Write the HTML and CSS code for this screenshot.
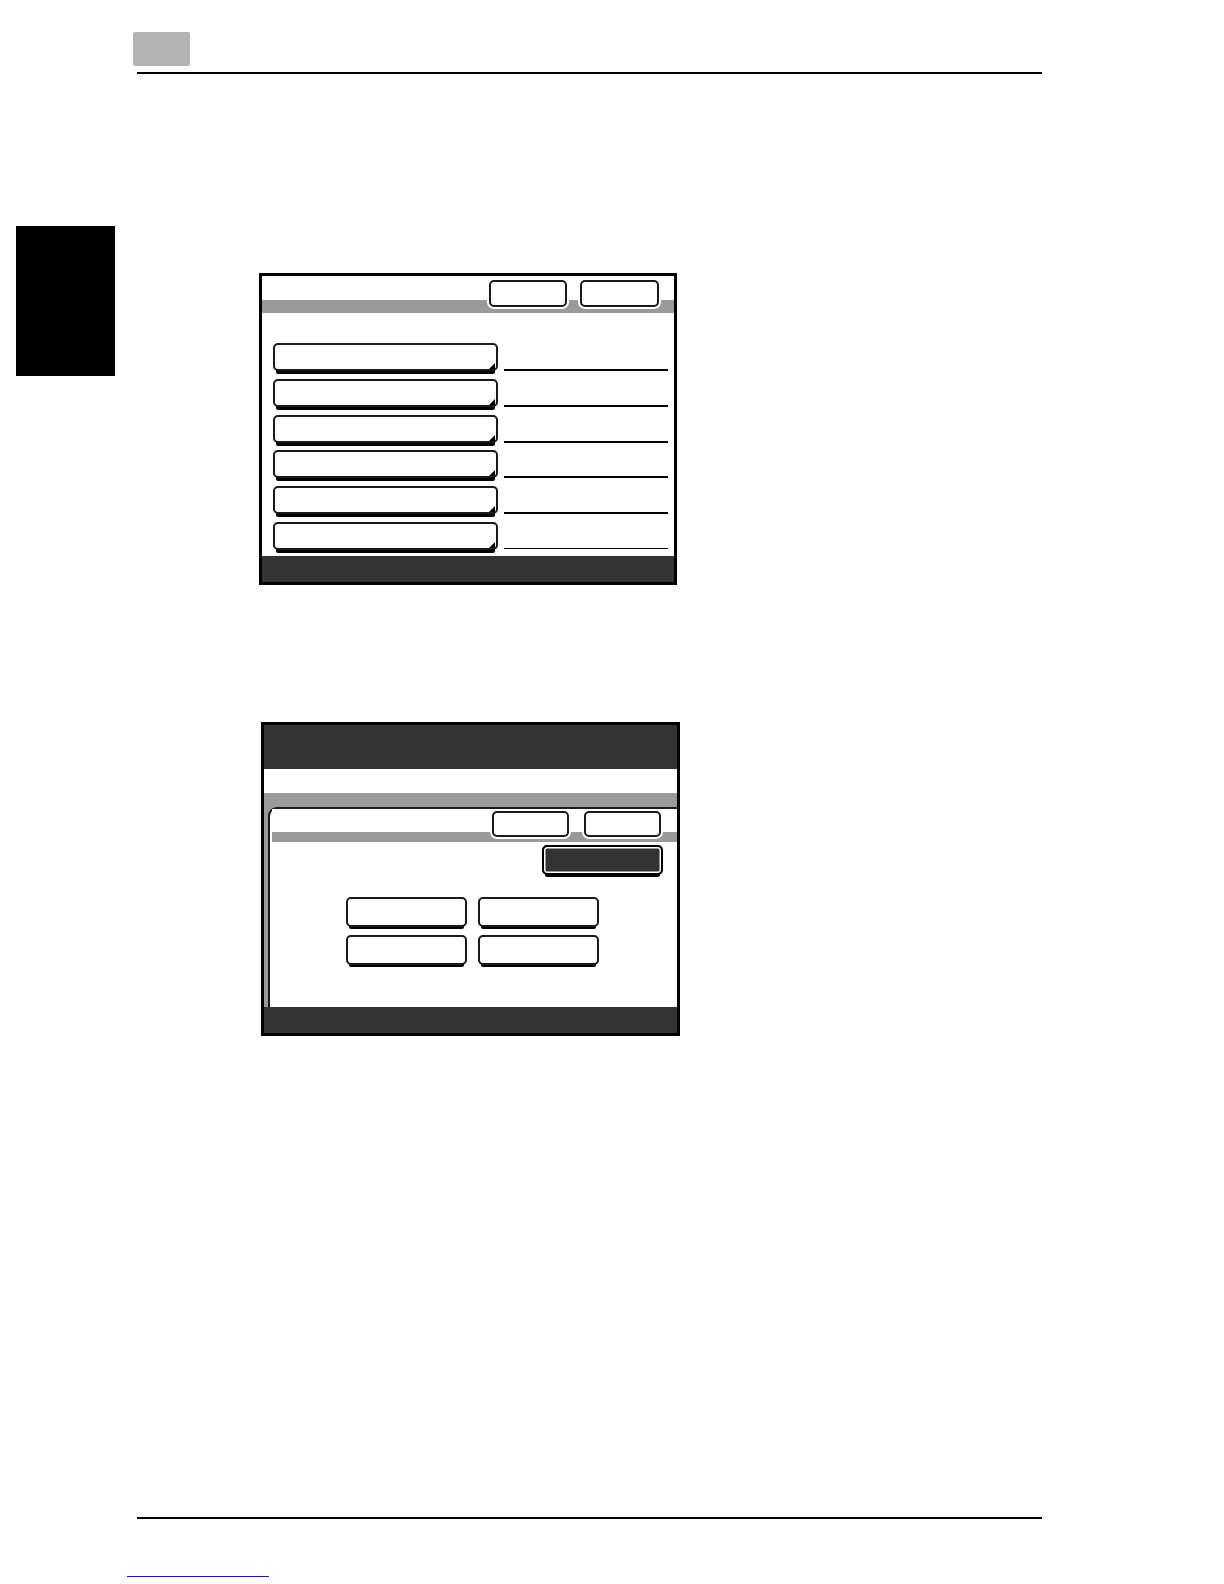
FILE: index.html
```html
<!DOCTYPE html>
<html lang="en">
<head>
<meta charset="utf-8">
<title>Screen</title>
<link rel="stylesheet" href="styles.css">
</head>
<body>
<div class="page">
  <header class="head">
    <div class="chapter"></div>
    <div class="rule"></div>
  </header>

  <div class="content">
    <div class="tab"></div>
    <div class="screens">
      <div class="screen s1">
        <div class="s1-body">
          <div class="titlebar t1">
            <div class="tbtn w78"></div>
            <div class="tbtn w79"></div>
          </div>
          <div class="rows">
            <div class="row"><div class="rowbtn"><span class="tri"></span></div><div class="rline"></div></div>
            <div class="row"><div class="rowbtn"><span class="tri"></span></div><div class="rline"></div></div>
            <div class="row"><div class="rowbtn"><span class="tri"></span></div><div class="rline"></div></div>
            <div class="row"><div class="rowbtn"><span class="tri"></span></div><div class="rline"></div></div>
            <div class="row"><div class="rowbtn"><span class="tri"></span></div><div class="rline thin"></div></div>
            <div class="row"><div class="rowbtn"><span class="tri"></span></div><div class="rline thin"></div></div>
          </div>
        </div>
        <div class="sfoot"></div>
      </div>

      <div class="screen s2">
        <div class="s2-head"></div>
        <div class="s2-white"></div>
        <div class="s2-gray">
          <div class="panel">
            <div class="titlebar t2">
              <div class="tbtn w77"></div>
              <div class="tbtn w77"></div>
            </div>
            <div class="darkrow"><div class="darkbtn"></div></div>
            <div class="grid4">
              <div class="gbtn"></div>
              <div class="gbtn"></div>
              <div class="gbtn"></div>
              <div class="gbtn"></div>
            </div>
          </div>
        </div>
        <div class="sfoot"></div>
      </div>
    </div>
  </div>

  <footer class="foot">
    <div class="rule"></div>
    <div class="link"></div>
  </footer>
</div>
</body>
</html>
```

FILE: styles.css
```css
* { box-sizing: border-box; }

html, body {
  margin: 0;
  padding: 0;
  background: #fff;
  font-family: "Liberation Sans", Arial, sans-serif;
}

.page {
  width: 1224px;
  height: 1584px;
  display: flex;
  flex-direction: column;
}

/* header */
.head {
  padding-top: 32px;
}
.chapter {
  margin-left: 133px;
  width: 57px;
  height: 34px;
  background: #b3b3b3;
  border-radius: 2px;
}
.rule {
  margin-left: 137px;
  width: 905px;
  height: 2px;
  background: #000;
}
.head .rule {
  margin-top: 6px;
}

/* content */
.content {
  display: flex;
  align-items: flex-start;
}
.tab {
  flex: none;
  margin-top: 152px;
  margin-left: 16px;
  width: 99px;
  height: 150px;
  background: #000;
}
.screens {
  margin-left: 144px;
  margin-top: 199px;
  display: flex;
  flex-direction: column;
}

.screen {
  border: 3px solid #000;
  display: flex;
  flex-direction: column;
  overflow: hidden;
  background: #fff;
}
.sfoot {
  flex: none;
  height: 26px;
  background: #333;
}

/* shared buttons */
.tbtn {
  flex: none;
  height: 27px;
  border: 2px solid #1a1a1a;
  border-radius: 5px;
  background: #fff;
  box-shadow: 0 0 0 2px #fff;
}
.w78 { width: 78px; }
.w79 { width: 79px; }
.w77 { width: 77px; height: 26px; }

.titlebar {
  display: flex;
  justify-content: flex-end;
}

/* screen 1 */
.s1 {
  width: 418px;
  height: 312px;
}
.s1-body {
  flex: 1;
}
.t1 {
  height: 37px;
  padding-top: 4px;
  padding-right: 15px;
  gap: 13px;
  background: linear-gradient(to bottom, #fff 0, #fff 24px, #9a9a9a 24px, #9a9a9a 37px);
}
.rows {
  padding-top: 30px;
  padding-left: 11px;
  display: flex;
  flex-direction: column;
  gap: 4.75px;
}
.row {
  display: flex;
  height: 31px;
}
.rowbtn {
  flex: none;
  width: 225px;
  height: 28px;
  border: 2px solid #1a1a1a;
  border-radius: 5px;
  background: #fff;
  box-shadow: 0 6px 0 -3px #000;
  display: flex;
  justify-content: flex-end;
  align-items: flex-end;
  padding-right: 1px;
}
.tri {
  width: 0;
  height: 0;
  border-left: 6px solid transparent;
  border-bottom: 6px solid #000;
}
.rline {
  align-self: flex-end;
  margin-left: 6px;
  margin-bottom: 3px;
  width: 164px;
  height: 2px;
  background: #000;
}
.rline.thin {
  height: 1.5px;
  margin-bottom: 3.5px;
}

/* screen 2 */
.s2 {
  margin-top: 137px;
  margin-left: 2px;
  width: 419px;
  height: 314px;
}
.s2-head {
  flex: none;
  height: 44px;
  background: #333;
}
.s2-white {
  flex: none;
  height: 24px;
  background: #fff;
}
.s2-gray {
  flex: none;
  height: 214px;
  background: #9a9a9a;
  padding-top: 14px;
  padding-left: 3.5px;
}
.panel {
  height: 200px;
  background: #fff;
  border-top: 2px solid #1a1a1a;
  border-left: 2px solid #1a1a1a;
  border-top-left-radius: 9px;
  display: flex;
  flex-direction: column;
}
.t2 {
  flex: none;
  height: 33px;
  margin-left: 2.5px;
  padding-top: 2px;
  padding-right: 16px;
  gap: 15px;
  background: linear-gradient(to bottom, #fff 0, #fff 23px, #9a9a9a 23px, #9a9a9a 33px);
}
.darkrow {
  display: flex;
  justify-content: flex-end;
  padding-top: 3px;
  padding-right: 14px;
}
.darkbtn {
  width: 121px;
  height: 30px;
  border: 2px solid #000;
  border-radius: 5px;
  background: #333;
  box-shadow: inset 0 0 0 1.5px #fff, 0 5px 0 -3px #000;
}
.grid4 {
  margin-top: 22px;
  margin-left: 76.5px;
  display: grid;
  grid-template-columns: 121px 121px;
  column-gap: 10.5px;
  row-gap: 8px;
}
.gbtn {
  height: 30px;
  border: 2px solid #1a1a1a;
  border-radius: 5px;
  background: #fff;
  box-shadow: 0 5px 0 -3px #000;
}

/* footer */
.foot {
  margin-top: auto;
  padding-bottom: 7.5px;
}
.link {
  margin-top: 57px;
  margin-left: 127px;
  width: 142px;
  height: 0;
  border-top: 1.5px solid #1f1f8f;
}
```
